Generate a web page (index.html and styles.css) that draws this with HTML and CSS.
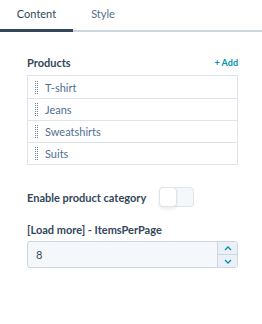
FILE: index.html
```html
<!DOCTYPE html>
<html lang="en">
<head>
    <meta charset="UTF-8">
    <meta name="viewport" content="width=device-width, initial-scale=1.0">
    <title>Module settings</title>
    <link rel="stylesheet" href="styles.css">
</head>
<body>
    <div class="tabs">
        <div class="tab active">Content</div>
        <div class="tab">Style</div>
    </div>

    <div class="panel">
        <div class="field">
            <div class="field-head">
                <span class="label">Products</span>
                <a class="add-link" href="#">+ Add</a>
            </div>
            <ul class="item-list">
                <li class="item"><span class="handle"></span>T-shirt</li>
                <li class="item"><span class="handle"></span>Jeans</li>
                <li class="item"><span class="handle"></span>Sweatshirts</li>
                <li class="item"><span class="handle"></span>Suits</li>
            </ul>
        </div>

        <div class="field toggle-row">
            <span class="label">Enable product category</span>
            <span class="toggle"><span class="knob"></span></span>
        </div>

        <div class="field">
            <div class="label">[Load more] - ItemsPerPage</div>
            <div class="number-input">
                <span class="value">8</span>
                <div class="spinner">
                    <span class="spin-btn">
                        <svg width="8" height="5" viewBox="0 0 8 5"><path d="M1 4 L4 1 L7 4" fill="none" stroke="#0091ae" stroke-width="1.3"/></svg>
                    </span>
                    <span class="spin-btn">
                        <svg width="8" height="5" viewBox="0 0 8 5"><path d="M1 1 L4 4 L7 1" fill="none" stroke="#0091ae" stroke-width="1.3"/></svg>
                    </span>
                </div>
            </div>
        </div>
    </div>
</body>
</html>
```

FILE: styles.css
```css
* {
    margin: 0;
    padding: 0;
    box-sizing: border-box;
}

body {
    font-family: Lato, "Open Sans", sans-serif;
    font-size: 11px;
    color: #33475b;
    background-color: #fff;
}

/* Tabs */
.tabs {
    display: flex;
    height: 32px;
    border-bottom: 2px solid #cbd6e2;
}

.tab {
    width: 60px;
    text-align: center;
    padding-top: 7px;
    color: #516f90;
}

.tab.active {
    width: 73px;
    color: #33475b;
    border-bottom: 3px solid #33475b;
    margin-bottom: -2px;
}

/* Panel */
.panel {
    padding: 24px 24px 0 27px;
}

.field {
    margin-bottom: 18px;
}

.field-head {
    display: flex;
    justify-content: space-between;
    align-items: center;
    margin-bottom: 6px;
}

.label {
    font-weight: bold;
    color: #33475b;
}

.add-link {
    font-size: 9px;
    font-weight: bold;
    color: #0091ae;
    text-decoration: none;
}

.item-list {
    list-style: none;
    border: 1px solid #dfe3eb;
}

.item {
    display: flex;
    align-items: center;
    height: 22px;
    padding-left: 7px;
    color: #516f90;
    border-top: 1px solid #dfe3eb;
}

.item:first-child {
    border-top: none;
}

/* dotted drag handle: two columns of 1px dots */
.handle {
    width: 3px;
    height: 13px;
    margin-right: 7px;
    background-image: repeating-linear-gradient(to bottom, #6a84a0 0 1px, transparent 1px 2px);
    -webkit-mask-image: repeating-linear-gradient(to right, #000 0 1px, transparent 1px 2px);
    mask-image: repeating-linear-gradient(to right, #000 0 1px, transparent 1px 2px);
}

/* Toggle */
.toggle-row {
    display: flex;
    align-items: center;
    gap: 13px;
    margin-top: 22px;
    margin-bottom: 16px;
}

.toggle {
    display: inline-flex;
    width: 35px;
    height: 20px;
    border: 1px solid #dfe3eb;
    border-radius: 4px;
    background-color: #f5f8fa;
}

.knob {
    width: 18px;
    height: 20px;
    margin: -1px 0 0 -1px;
    background-color: #fff;
    border: 1px solid #dfe3eb;
    border-radius: 4px;
    box-shadow: 0 2px 3px rgba(0, 0, 0, 0.08);
}

/* Number input */
.number-input {
    display: flex;
    height: 27px;
    margin-top: 5px;
    background-color: #f5f8fa;
    border: 1px solid #cbd6e2;
    border-radius: 3px;
}

.value {
    flex: 1;
    display: flex;
    align-items: center;
    padding-left: 8px;
}

.spinner {
    display: flex;
    flex-direction: column;
    width: 20px;
    border-left: 1px solid #cbd6e2;
}

.spin-btn {
    flex: 1;
    display: flex;
    align-items: center;
    justify-content: center;
    background-color: #eaf0f6;
}

.spin-btn + .spin-btn {
    border-top: 1px solid #cbd6e2;
}
```
